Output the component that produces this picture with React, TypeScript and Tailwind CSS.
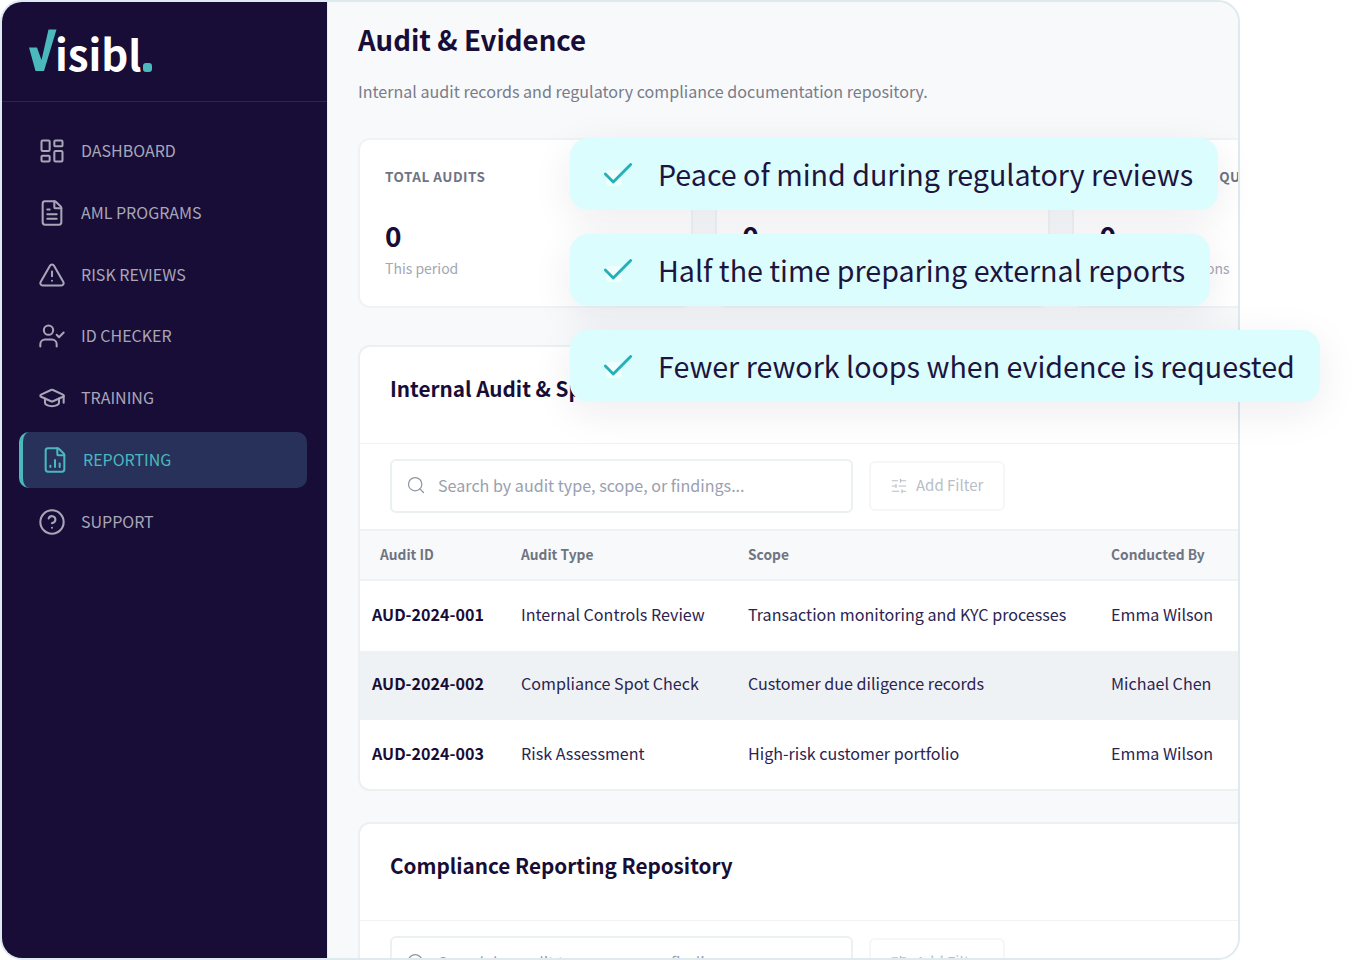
import {
  Check,
  CircleHelp,
  FileChartColumn,
  FileText,
  GraduationCap,
  LayoutDashboard,
  Search,
  SlidersHorizontal,
  TriangleAlert,
  UserCheck,
} from 'lucide-react'

const nav = [
  { label: 'DASHBOARD', icon: LayoutDashboard },
  { label: 'AML PROGRAMS', icon: FileText },
  { label: 'RISK REVIEWS', icon: TriangleAlert },
  { label: 'ID CHECKER', icon: UserCheck },
  { label: 'TRAINING', icon: GraduationCap },
  { label: 'REPORTING', icon: FileChartColumn, active: true },
  { label: 'SUPPORT', icon: CircleHelp },
]

const stats = [
  { label: 'TOTAL AUDITS', value: '0', sub: 'This period' },
  { label: 'OPEN FINDINGS', value: '0', sub: 'Awaiting review' },
  { label: 'IDV EVIDENCE REQUESTS', value: '0', sub: 'Pending resolutions' },
]

const rows = [
  ['AUD-2024-001', 'Internal Controls Review', 'Transaction monitoring and KYC processes', 'Emma Wilson'],
  ['AUD-2024-002', 'Compliance Spot Check', 'Customer due diligence records', 'Michael Chen'],
  ['AUD-2024-003', 'Risk Assessment', 'High-risk customer portfolio', 'Emma Wilson'],
]

const callouts = [
  { text: 'Peace of mind during regulatory reviews', width: 'w-[648px]' },
  { text: 'Half the time preparing external reports', width: 'w-[640px]' },
  { text: 'Fewer rework loops when evidence is requested', width: 'w-[750px]' },
]

function Logo() {
  return (
    <div className="relative h-[100px] border-b border-white/10">
      <svg className="absolute left-[25px] top-[25px]" width="32" height="46" viewBox="27 27 32 46">
        <polygon points="29,47.5 37,47.5 41.5,60 48.5,29.5 56.5,29.5 44,71 35.5,71" fill="#4bb8bd" />
      </svg>
      <div className="absolute left-[53px] top-[21px] text-[42px] leading-[60px] font-bold text-white">isibl</div>
      <div className="absolute left-[141px] top-[61px] size-[9px] rounded-[3px] bg-[#4bb8bd]" />
    </div>
  )
}

function Toolbar() {
  return (
    <div className="flex h-[85px] shrink-0 items-start gap-4 pl-[30px] pt-[15px]">
      <div className="flex h-[54px] w-[463px] items-center gap-3 rounded-md border-2 border-[#ebf0f3] px-[14px] pb-[2px] text-[16.1px] text-[#9aa0ae]">
        <Search size={20} strokeWidth={1.5} className="text-[#8e95a3]" />
        Search by audit type, scope, or findings...
      </div>
      <div className="mt-[2px] flex h-[50px] w-[136px] items-center gap-2 rounded-md border-2 border-[#f4f6f7] pb-[1px] pl-[19px] text-[15px] text-[#b9bdc7]">
        <SlidersHorizontal size={18} strokeWidth={1.5} />
        Add Filter
      </div>
    </div>
  )
}

export default function App() {
  return (
    <div className="relative h-[960px] w-[1360px] overflow-hidden bg-white font-['Noto_Sans_CJK_SC',sans-serif] text-[#170d36]">
      <div className="flex h-[960px] w-[1240px] overflow-hidden rounded-[22px] border-2 border-[#dfeaee] bg-[#f8f9fb]">
        <aside className="w-[325px] shrink-0 bg-[#170d36]">
          <Logo />
          <nav className="flex flex-col gap-[5.8px] pl-[17px] pt-[21px]">
            {nav.map(({ label, icon: Icon, active }) =>
              active ? (
                <div
                  key={label}
                  className="flex h-14 w-[288px] items-center gap-[14px] rounded-[10px] border-l-4 border-[#4bb8bd] bg-[#27315a] pl-[18px] text-[16px] text-[#4bb8bd]"
                >
                  <Icon size={28} strokeWidth={1.75} />
                  <span className="-translate-y-px">{label}</span>
                </div>
              ) : (
                <div
                  key={label}
                  className="flex h-14 w-[288px] items-center gap-[15px] pl-[19px] text-[16px] text-[#a9a6b8]"
                >
                  <Icon size={28} strokeWidth={1.75} />
                  <span className="-translate-y-px">{label}</span>
                </div>
              ),
            )}
          </nav>
        </aside>

        <main className="min-w-0 flex-1 overflow-hidden border-l border-[#e8ecf4] pl-[30px] pt-[18px]">
          <h1 className="text-[27.6px] leading-[38px] font-bold">Audit &amp; Evidence</h1>
          <p className="mt-[20px] text-[16.08px] leading-[26px] text-[#787c8a]">
            Internal audit records and regulatory compliance documentation repository.
          </p>

          <div className="mt-[34px] flex gap-[22px]">
            {stats.map((s) => (
              <div
                key={s.label}
                className="h-[170px] w-[335.2px] shrink-0 rounded-xl border-2 border-[#f0f3f5] bg-white pl-[25px] pt-[26px]"
              >
                <div className="text-[13.5px] leading-5 font-bold tracking-[0.5px] whitespace-nowrap text-[#6f7482]">
                  {s.label}
                </div>
                <div className="mt-[30px] text-[28px] leading-[38px] font-bold">{s.value}</div>
                <div className="mt-[4px] text-[14px] leading-5 whitespace-nowrap text-[#a3a7b3]">{s.sub}</div>
              </div>
            ))}
          </div>

          <section className="mt-[37px] flex h-[446px] w-[1000px] flex-col rounded-xl border-2 border-[#ebf0f3] bg-white">
            <h2 className="flex h-[96px] shrink-0 items-center pb-3 pl-[30px] text-[20.7px] font-bold">
              Internal Audit &amp; Spot Checks
            </h2>
            <div className="border-t border-[#f0f3f5]">
              <Toolbar />
            </div>
            <div className="grid h-[52px] shrink-0 grid-cols-[161px_227px_363px_1fr] items-center border-t-2 border-b-2 border-[#eef2f4] bg-[#f8f9fb] pb-[2px] text-[13.75px] font-bold text-[#6f7482]">
              <div className="pl-[20px]">Audit ID</div>
              <div>Audit Type</div>
              <div>Scope</div>
              <div>Conducted By</div>
            </div>
            {rows.map((r, i) => (
              <div
                key={r[0]}
                className={`grid h-[69.67px] shrink-0 grid-cols-[161px_227px_363px_1fr] items-center pb-1 text-[16.1px] text-[#2c2450] ${
                  i === 1 ? 'bg-[#eff2f4]' : ''
                }`}
              >
                <div className="pl-[12px] font-bold text-[#170d36]">{r[0]}</div>
                <div>{r[1]}</div>
                <div>{r[2]}</div>
                <div>{r[3]}</div>
              </div>
            ))}
          </section>

          <section className="mt-[31px] w-[1000px] rounded-xl border-2 border-[#ebf0f3] bg-white">
            <h2 className="flex h-[96px] items-center pb-3 pl-[30px] text-[20.7px] font-bold">
              Compliance Reporting Repository
            </h2>
            <div className="border-t border-[#f0f3f5]">
              <Toolbar />
            </div>
          </section>
        </main>
      </div>

      <div className="absolute left-[570px] top-[138px] flex flex-col gap-6">
        {callouts.map((c) => (
          <div
            key={c.text}
            className={`flex h-[72px] ${c.width} items-center rounded-[18px] bg-[#dcfdfe] pl-[29px] text-[28.65px] whitespace-nowrap text-[#1d1440] shadow-[0_10px_40px_rgba(30,30,70,0.08)]`}
          >
            <span className="relative mr-[21px] flex h-[38px] w-[38px] shrink-0">
              <span className="absolute left-[7px] top-[15px] size-4 rounded-[4px] bg-white/60" />
              <Check size={38} strokeWidth={1.8} className="relative text-[#1fb2b7]" />
            </span>
            {c.text}
          </div>
        ))}
      </div>
    </div>
  )
}
